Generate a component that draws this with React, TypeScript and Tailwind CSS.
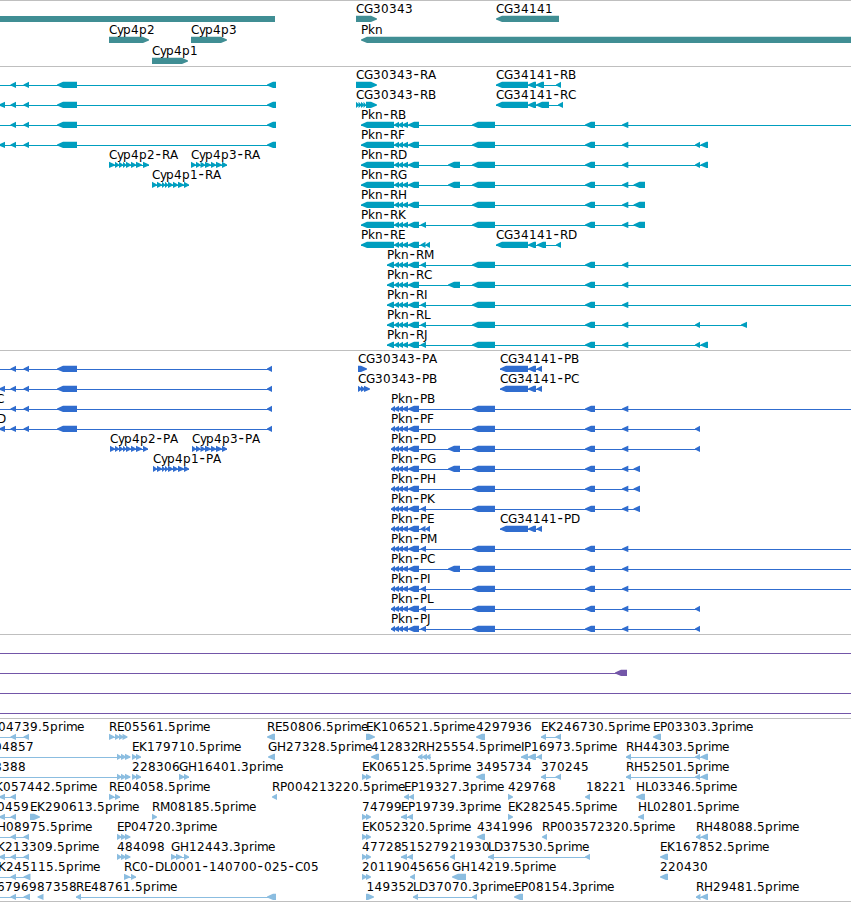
import React from 'react';

type Part = [number, number];

interface Feature {
  label?: string;
  x?: number; // label origin, defaults to the first part
  dir: 'L' | 'R' | 'none';
  parts: Part[];
  line?: Part;
}

interface TrackProps {
  rows: Feature[][];
  color: string;
  rowHeight?: number;
  className?: string;
}

const WIDTH = 851;
const HEAD = 6;

// Glyph advances in pixels; anything missing (digits, p, n, ...) is 8 wide
const ADVANCE: Record<string, number> = {
  A: 9, B: 7, D: 9, E: 7, F: 7, G: 9, H: 9, I: 3, J: 4, L: 6, M: 10, P: 7,
  y: 6, k: 7, r: 5, i: 3, m: 11, e: 7, '.': 4, '-': 7,
};

// Splits a label at its hyphens and gives every glyph its own x
const layoutLabel = (text: string, start: number) => {
  let x = start;
  return text.split(/(-)/).map(chunk => ({
    chunk,
    xs: Array.from(chunk).map(ch => {
      const pos = x;
      x += ADVANCE[ch] ?? 8;
      return pos;
    }),
  }));
};

const partPoints = ([a, b]: Part, dir: Feature['dir']) => {
  const head = Math.min(HEAD, b - a);
  if (dir === 'L') {
    return `${a},16.4 ${a + head},13.8 ${b},13.8 ${b},20 ${a + head},20 ${a},17.6`;
  }
  if (dir === 'R') {
    return `${a},13.8 ${b - head},13.8 ${b},16.4 ${b},17.6 ${b - head},20 ${a},20`;
  }
  return `${a},14 ${b},14 ${b},20 ${a},20`;
};

const FeatureGlyph: React.FC<{ feature: Feature }> = ({ feature }) => {
  const { label, dir, parts, line } = feature;
  const x = feature.x ?? parts[0]?.[0] ?? 0;
  return (
    <g>
      {line && <rect x={line[0]} y={17} width={line[1] - line[0]} height={1} shapeRendering="crispEdges" />}
      {parts.map((p, i) => (
        <polygon key={i} points={partPoints(p, dir)} />
      ))}
      {label && (
        <text className="fill-black">
          {layoutLabel(label, x).map(({ chunk, xs }, i) =>
            chunk === '-' ? (
              <tspan key={i} x={xs[0] + 0.5} y={11} className="text-[15px]">-</tspan>
            ) : (
              <tspan key={i} x={xs.join(' ')} y={11}>{chunk}</tspan>
            )
          )}
        </text>
      )}
    </g>
  );
};

const Track: React.FC<TrackProps> = ({ rows, color, rowHeight = 20, className = '' }) => (
  <section className={`border-t border-[#bfbfbf] pt-px ${className}`}>
    {rows.map((row, i) => (
      <svg
        key={i}
        width={WIDTH}
        height={rowHeight}
        viewBox={`0 0 ${WIDTH} ${rowHeight}`}
        className={`block overflow-visible ${color}`}
      >
        {row.map((f, j) => (
          <FeatureGlyph key={j} feature={f} />
        ))}
      </svg>
    ))}
  </section>
);

// n small exons, each running up to the start of the next one
const run = (stops: number[]): Part[] => stops.slice(0, -1).map((s, i) => [s, Math.min(stops[i + 1], s + 6)]);

const left = (label: string | undefined, parts: Part[], x?: number, line?: Part): Feature => ({ label, x, dir: 'L', parts, line });
const right = (label: string | undefined, parts: Part[], x?: number, line?: Part): Feature => ({ label, x, dir: 'R', parts, line });

/* ---------- genes ---------- */

const genes: Feature[][] = [
  [
    { dir: 'none', parts: [[0, 275]] },
    right('CG30343', [[356, 377]]),
    left('CG34141', [[496, 559]]),
  ],
  [
    right('Cyp4p2', [[109, 149]]),
    right('Cyp4p3', [[191, 227]]),
    left('Pkn', [[361, 860]]),
  ],
  [right('Cyp4p1', [[152, 188]])],
];

/* ---------- transcripts ---------- */

const upstream = (end: number, extra: boolean): Feature =>
  left(undefined, [...(extra ? ([[-1, 5]] as Part[]) : []), [10.5, 16], [23.5, 29], [57, 77], [267, end]], 0, [0, end]);

const CORE: Part[] = [[394, 399], [398, 403], [402, 408], [408, 419]];
const MIDDLE: Part[] = [[472, 495], [585, 595], [622, 628.3]];
const EXON_420: Part = [420.5, 426];
const EXON_448: Part = [448, 460];

const pkn = (label: string, first: Part, optional: Part[], tail: Part[]): Feature => {
  const end = tail.length ? tail[tail.length - 1][1] : WIDTH;
  return left(label, [first, ...CORE, ...optional, ...MIDDLE, ...tail], first[0], [first[0], end]);
};

const LONG: Part = [361, 394];
const SHORT: Part = [387, 394];
const PAIR_700: Part[] = [[695, 700], [700.5, 708]];
const END_645: Part[] = [[633.5, 645]];

const transcripts: Feature[][] = [
  [
    upstream(276, false),
    right('CG30343-RA', [[356, 377]]),
    left('CG34141-RB', [[496, 528], [528, 536], [536, 544], [556, 561]], 496, [496, 561]),
  ],
  [
    upstream(276, true),
    right('CG30343-RB', [[356, 359], [358.5, 361.5], [361, 364], [363.5, 366], [366, 377]]),
    left('CG34141-RC', [[496, 528], [528, 536], [536, 549], [558, 563]], 496, [496, 563]),
  ],
  [upstream(276, false), pkn('Pkn-RB', LONG, [], [])],
  [upstream(276, true), pkn('Pkn-RF', LONG, [], PAIR_700)],
  [
    right('Cyp4p2-RA', run([109, 115, 119, 123, 126, 131, 136, 143, 149]), 109, [109, 149]),
    right('Cyp4p3-RA', run([191, 196, 200.5, 205, 211, 216, 222, 227]), 191, [191, 227]),
    pkn('Pkn-RD', LONG, [EXON_448], PAIR_700),
  ],
  [
    right('Cyp4p1-RA', run([152, 157, 162, 165, 168, 173, 178, 184, 189]), 152, [152, 189]),
    pkn('Pkn-RG', LONG, [EXON_448], END_645),
  ],
  [pkn('Pkn-RH', LONG, [], END_645)],
  [pkn('Pkn-RK', LONG, [EXON_420], END_645)],
  [
    left('Pkn-RE', [LONG, ...CORE, [420.5, 425.5], [425.5, 430]], 361, [361, 430]),
    left('CG34141-RD', [[496, 528], [528, 536], [537, 546], [556, 561]], 496, [496, 561]),
  ],
  [pkn('Pkn-RM', SHORT, [EXON_420], [])],
  [pkn('Pkn-RC', SHORT, [EXON_448], [])],
  [pkn('Pkn-RI', SHORT, [EXON_420], [])],
  [pkn('Pkn-RL', SHORT, [EXON_420], [[695, 700], [741, 747]])],
  [pkn('Pkn-RJ', SHORT, [EXON_420], PAIR_700)],
];

/* ---------- proteins ---------- */

const CDS: Part = [391, 395];
const END_640: Part[] = [[633.5, 640]];
const END_700: Part[] = [[695, 700]];
const cg34141 = (label: string) => left(label, [[500, 528], [528, 536], [536.5, 542]], 500, [500, 542]);

const proteins: Feature[][] = [
  [upstream(272, false), right('CG30343-PA', [[358, 367]]), cg34141('CG34141-PB')],
  [upstream(272, true), right('CG30343-PB', [[358, 362], [361, 365], [364, 370]]), cg34141('CG34141-PC')],
  [left('C', [], -4), upstream(272, false), pkn('Pkn-PB', CDS, [], [])],
  [left('D', [], -3), upstream(272, true), pkn('Pkn-PF', CDS, [], END_700)],
  [
    right('Cyp4p2-PA', run([110, 115, 119, 123, 126, 131, 136, 143, 148]), 110, [110, 148]),
    right('Cyp4p3-PA', run([192, 196, 200.5, 205, 211, 216, 222, 227]), 192, [192, 227]),
    pkn('Pkn-PD', CDS, [EXON_448], END_700),
  ],
  [
    right('Cyp4p1-PA', run([153, 157, 162, 165, 168, 173, 178, 184, 189]), 153, [153, 189]),
    pkn('Pkn-PG', CDS, [EXON_448], END_640),
  ],
  [pkn('Pkn-PH', CDS, [], END_640)],
  [pkn('Pkn-PK', CDS, [EXON_420], END_640)],
  [left('Pkn-PE', [CDS, ...CORE, [420.5, 425.5], [425.5, 430]], 391, [391, 430]), cg34141('CG34141-PD')],
  [pkn('Pkn-PM', CDS, [EXON_420], [])],
  [pkn('Pkn-PC', CDS, [EXON_448], [])],
  [pkn('Pkn-PI', CDS, [EXON_420], [])],
  [pkn('Pkn-PL', CDS, [EXON_420], END_700)],
  [pkn('Pkn-PJ', CDS, [EXON_420], END_700)],
];

/* ---------- long spanning models ---------- */

const spans: Feature[][] = [
  [left(undefined, [], 0, [0, WIDTH])],
  [left(undefined, [[615, 627]], 0, [0, 627])],
  [left(undefined, [], 0, [0, WIDTH])],
  [left(undefined, [], 0, [0, WIDTH])],
];

/* ---------- ESTs ---------- */

const E0: Part = [-1, 5];
const E11: Part = [10.5, 16];
const E24: Part = [23.5, 29];
const TRIPLE_117: Part[] = [[117, 121.5], [121, 126], [125, 130.5]];
const PAIR_132: Part[] = [[132, 136.5], [136, 141]];
const PAIR_362: Part[] = [[362, 367], [366, 371]];
const PAIR_696: Part[] = [[696, 700.5], [701, 708]];

const ests: Feature[][] = [
  [
    left('04739.5prime', [E11, E24], -2, [0, 29]),
    right('RE05561.5prime', [[109, 114.5], [115, 119.5], [119, 123.5], [122.5, 127.5]], 109, [109, 127]),
    left('RE50806.5prime', [[267, 275]]),
    right('EK106521.5prime', [[366, 375]]),
    left('4297936', [[476, 485]]),
    left('EK246730.5prime', [[541, 546], [555.5, 561]], 541, [541, 561]),
    left('EP03303.3prime', [[653, 661]]),
  ],
  [
    right('04857', TRIPLE_117, -6, [0, 130]),
    right('EK179710.5prime', PAIR_132, 132, [132, 141]),
    left('GH27328.5prime', [[268, 275]]),
    left('412832', [[371, 379]]),
    left('RH25554.5prime', [[418, 422.5], [422, 427], [426, 430.5]], 418, [418, 431]),
    left('IP16973.5prime', [[521, 528], [528, 536], [537, 542]], 521, [521, 542]),
    left('RH44303.5prime', [[626, 631], ...PAIR_700], 626, [626, 708]),
  ],
  [
    right('8388', TRIPLE_117, -6, [0, 130]),
    right('228306', PAIR_132, 132, [132, 141]),
    right('GH16401.3prime', [[179, 184.5], [184, 189]], 179, [179, 189]),
    right('EK065125.5prime', PAIR_362),
    left('3495734', [[476, 485]]),
    left('370245', [[541, 546], [555.5, 561]], 541, [541, 561]),
    left('RH52501.5prime', [[626, 631], ...PAIR_700], 626, [626, 708]),
  ],
  [
    left('K057442.5prime', [E0, E11], -5, [0, 16]),
    right('RE04058.5prime', [[109, 114.5], [115, 120]], 109, [109, 120]),
    left('RP004213220.5prime', [[272, 277]]),
    left('EP19327.3prime', [[404, 409], [409, 414]]),
    right('429768', [[508, 513]]),
    left('18221', [[585, 590]], 586),
    left('HL03346.5prime', [[636, 645]]),
  ],
  [
    left('0459', [E0, E11], -3, [0, 16]),
    right('EK290613.5prime', [[30, 40]]),
    right('RM08185.5prime', [[152, 157]]),
    right('74799', PAIR_362),
    left('EP19739.3prime', [[401, 407], [407.5, 413]], 401, [401, 413]),
    right('EK282545.5prime', [[508, 513]]),
    left('HL02801.5prime', [[638, 644]]),
  ],
  [
    left('H08975.5prime', [E11, E24], -3, [0, 29]),
    right('EP04720.3prime', TRIPLE_117),
    right('EK052320.5prime', PAIR_362),
    left('4341996', [[477, 485]]),
    left('RP003572320.5prime', [[542, 547]]),
    left('RH48088.5prime', PAIR_696, 696, [696, 708]),
  ],
  [
    left('K213309.5prime', [E0, E11, E24], -3, [0, 29]),
    right('484098', TRIPLE_117),
    right('GH12443.3prime', [[171, 176.5], [176, 182], [184, 189]], 171, [171, 189]),
    right('47728', PAIR_362),
    left('515279', [[401, 407], [407.5, 413]], 401, [401, 413]),
    left('21930', [[450, 455]]),
    left('LD37530.5prime', [[488, 494], [585, 590]], 488, [488, 590]),
    left('EK167852.5prime', [[660, 668]]),
  ],
  [
    left('K245115.5prime', [E11, [23.5, 30.5]], -2, [0, 30]),
    right('RC0-DL0001-140700-025-C05', [[124, 130], [131, 136]], 124, [124, 136]),
    right('201190', PAIR_362),
    left('45656', [[410, 415]]),
    left('GH14219.5prime', [[452, 466]]),
    left('220430', [[660, 668]]),
  ],
  [
    left('67969', [E11, [23.5, 30]], -3, [0, 30]),
    left('87358', [[37.5, 43.5]], 37),
    left('RE48761.5prime', [[76, 81], [267, 276]], 76, [76, 276]),
    right('149352', [[366, 374]], 366.5),
    left('LD37070.3prime', [[413, 418], [472, 477]], 413, [413, 477]),
    left('EP08154.3prime', [[514, 523]]),
    left('RH29481.5prime', PAIR_696, 696, [696, 708]),
  ],
];

const App: React.FC = () => (
  <main className="w-[851px] h-[902px] overflow-hidden bg-white font-['DejaVu_Sans','Liberation_Sans',sans-serif] text-[12px]">
    <Track rows={genes} color="fill-[#408e94]" rowHeight={21} className="pb-px" />
    <Track rows={transcripts} color="fill-[#009ebf]" className="pb-[2px]" />
    <Track rows={proteins} color="fill-[#306dcf]" className="pb-[2px]" />
    <Track rows={spans} color="fill-[#7356a8]" className="pb-[2px]" />
    <Track rows={ests} color="fill-[#8bbde0]" className="border-b pb-px" />
  </main>
);

export default App;
